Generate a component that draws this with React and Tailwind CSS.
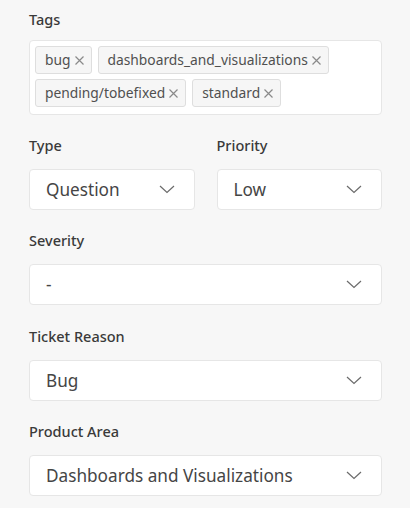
import React from "react";

const font = { fontFamily: '"Noto Sans", "Open Sans", sans-serif' };

function Chevron() {
  return (
    <svg width="16" height="9" viewBox="0 0 16 9" fill="none" className="shrink-0">
      <path d="M1 1l7 6.5L15 1" stroke="#6b6b6b" strokeWidth="1.2" />
    </svg>
  );
}

function Tag({ label }) {
  return (
    <span className="flex h-[28px] items-center gap-[3px] rounded-[3px] border border-[#dedede] bg-[#f6f6f6] pl-[9px] pr-[6px] text-[13.8px] text-[#505050]">
      {label}
      <svg width="11" height="11" viewBox="0 0 11 11" className="mt-[1px]">
        <path d="M1.5 1.5l8 8M9.5 1.5l-8 8" stroke="#8a8a8a" strokeWidth="1.2" />
      </svg>
    </span>
  );
}

function Label({ children }) {
  return <div className="h-[20px] text-[14.5px] font-medium leading-[20px] text-[#3a3a3a]">{children}</div>;
}

function Select({ value }) {
  return (
    <div className="mt-[14px] flex h-[41px] items-center justify-between rounded-[4px] border border-[#e6e6e6] bg-white pl-[16px] pr-[19px] text-[17.2px] text-[#454545]">
      <span>{value}</span>
      <Chevron />
    </div>
  );
}

export default function App() {
  return (
    <div className="h-[508px] w-[410px] bg-[#f7f7f7] pl-[29px] pr-[28px] pt-[9px]" style={font}>
      <Label>Tags</Label>
      <div className="mt-[11px] flex flex-wrap gap-x-[6px] gap-y-[5px] rounded-[4px] border border-[#e6e6e6] bg-white p-[5px] pb-[7px]">
        <Tag label="bug" />
        <Tag label="dashboards_and_visualizations" />
        <Tag label="pending/tobefixed" />
        <Tag label="standard" />
      </div>

      <div className="mt-[20px] grid grid-cols-2 gap-x-[22px]">
        <div>
          <Label>Type</Label>
          <Select value="Question" />
        </div>
        <div>
          <Label>Priority</Label>
          <Select value="Low" />
        </div>
      </div>

      <div className="mt-[20px]">
        <Label>Severity</Label>
        <Select value="-" />
      </div>

      <div className="mt-[21px]">
        <Label>Ticket Reason</Label>
        <Select value="Bug" />
      </div>

      <div className="mt-[20px]">
        <Label>Product Area</Label>
        <Select value="Dashboards and Visualizations" />
      </div>
    </div>
  );
}
